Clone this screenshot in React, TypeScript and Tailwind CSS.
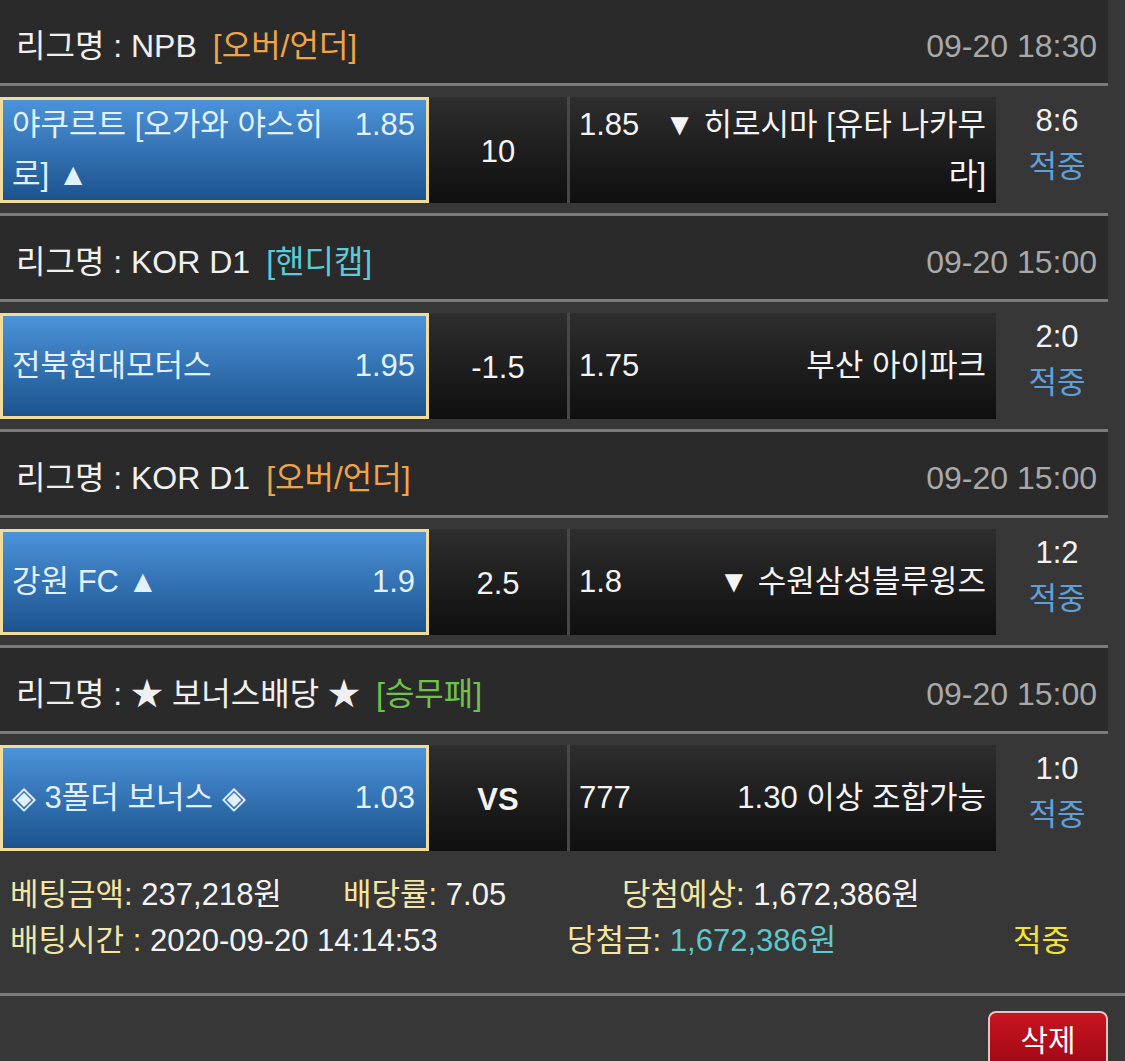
import React from "react";

type Match = {
  league: string;
  tag: string;
  tagColor: string;
  time: string;
  home: string;
  homeOdds: string;
  line: string;
  lineBold?: boolean;
  awayOdds: string;
  away: string;
  score: string;
};

const matches: Match[] = [
  {
    league: "리그명 : NPB",
    tag: "[오버/언더]",
    tagColor: "text-[#f0a348]",
    time: "09-20 18:30",
    home: "야쿠르트 [오가와 야스히 로] ▲",
    homeOdds: "1.85",
    line: "10",
    awayOdds: "1.85",
    away: "▼ 히로시마 [유타 나카무 라]",
    score: "8:6",
  },
  {
    league: "리그명 : KOR D1",
    tag: "[핸디캡]",
    tagColor: "text-[#5ccbd8]",
    time: "09-20 15:00",
    home: "전북현대모터스",
    homeOdds: "1.95",
    line: "-1.5",
    awayOdds: "1.75",
    away: "부산 아이파크",
    score: "2:0",
  },
  {
    league: "리그명 : KOR D1",
    tag: "[오버/언더]",
    tagColor: "text-[#f0a348]",
    time: "09-20 15:00",
    home: "강원 FC ▲",
    homeOdds: "1.9",
    line: "2.5",
    awayOdds: "1.8",
    away: "▼ 수원삼성블루윙즈",
    score: "1:2",
  },
  {
    league: "리그명 : ★ 보너스배당 ★",
    tag: "[승무패]",
    tagColor: "text-[#6fc24c]",
    time: "09-20 15:00",
    home: "◈ 3폴더 보너스 ◈",
    homeOdds: "1.03",
    line: "VS",
    lineBold: true,
    awayOdds: "777",
    away: "1.30 이상 조합가능",
    score: "1:0",
  },
];

const Rule = () => <div className="w-[1108px] h-[3px] bg-[#7b7b7b]" />;

const MatchBlock = ({ m, first }: { m: Match; first: boolean }) => (
  <div>
    {/* league header */}
    {!first && <Rule />}
    <div className="w-[1108px] h-[83px] bg-[#2a2a2a] flex items-center justify-between pl-[16px] pr-[11px] pt-[8px] text-[32px]">
      <div className="flex items-center">
        <span className="text-[#f0f0f0]">{m.league}</span>
        <span className={`ml-[16px] ${m.tagColor}`}>{m.tag}</span>
      </div>
      <span className="text-[#a9a9a9]">{m.time}</span>
    </div>
    <Rule />

    {/* bet row */}
    <div className="flex h-[106px] w-[1108px] mt-[11px] mb-[10px]">
      <div className="w-[429px] border-[3px] border-[#f2dc9c] bg-gradient-to-b from-[#4c93da] to-[#1c538e] flex items-center pl-[9px] pr-[11px] text-[#e2f1ff]">
        <div className="w-full leading-[50px]">
          <span className="float-right ml-[20px]">{m.homeOdds}</span>
          <span>{m.home}</span>
        </div>
      </div>
      <div
        className={`w-[138px] bg-gradient-to-b from-[#2e2e2e] to-[#0f0f0f] flex items-center justify-center pt-[5px] text-[#f4f4f4] ${
          m.lineBold ? "font-bold" : ""
        }`}
      >
        {m.line}
      </div>
      <div className="w-[3px] bg-[#474747]" />
      <div className="w-[426px] bg-gradient-to-b from-[#2e2e2e] to-[#0f0f0f] flex items-center pl-[9px] pr-[10px] text-[#f4f4f4]">
        <div className="w-full leading-[50px] text-right">
          <span className="float-left mr-[20px]">{m.awayOdds}</span>
          <span>{m.away}</span>
        </div>
      </div>
      <div className="w-[112px] flex flex-col items-center pl-[10px] pt-[1px] leading-[46px]">
        <span className="text-[#f2f2f2]">{m.score}</span>
        <span className="text-[#5ea0dc]">적중</span>
      </div>
    </div>
  </div>
);

const App = () => {
  return (
    <div
      className="w-[1125px] min-h-[1061px] bg-[#373737] text-[31px] overflow-hidden"
      style={{ fontFamily: '"Liberation Sans", "Noto Sans CJK KR", sans-serif' }}
    >
      {matches.map((m, i) => (
        <MatchBlock key={i} m={m} first={i === 0} />
      ))}

      {/* summary */}
      <div className="pl-[10px] pt-[11px] pb-[29px] leading-[46px] text-[#f4f4f4]">
        <div className="flex">
          <div className="w-[333px]">
            <span className="text-[#f3e6a4]">베팅금액:</span> 237,218원
          </div>
          <div className="w-[279px]">
            <span className="text-[#f3e6a4]">배당률:</span> 7.05
          </div>
          <div>
            <span className="text-[#f3e6a4]">당첨예상:</span> 1,672,386원
          </div>
        </div>
        <div className="flex">
          <div className="w-[557px]">
            <span className="text-[#f3e6a4]">배팅시간 :</span> 2020-09-20 14:14:53
          </div>
          <div className="w-[446px]">
            <span className="text-[#f3e6a4]">당첨금:</span>{" "}
            <span className="text-[#5ec9cc]">1,672,386원</span>
          </div>
          <div className="text-[#f2e23c]">적중</div>
        </div>
      </div>

      <div className="h-[3px] bg-[#7b7b7b]" />

      <div className="flex justify-end pr-[17px] pt-[15px]">
        <button className="w-[120px] h-[58px] rounded-[8px] border-2 border-[#e6c2c4] bg-gradient-to-b from-[#c8141f] to-[#a00816] text-white text-[30px] flex items-center justify-center">
          삭제
        </button>
      </div>
    </div>
  );
};

export default App;
